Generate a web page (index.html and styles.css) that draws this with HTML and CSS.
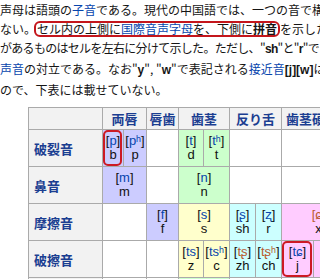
FILE: index.html
```html
<!DOCTYPE html>
<html lang="ja">
<head>
<meta charset="utf-8">
<title>声母</title>
<link rel="stylesheet" href="styles.css">
</head>
<body>
<div class="intro">
  <div class="line">声母は語頭の<a href="#">子音</a>である。現代の中国語では、一つの音で構成</div>
  <div class="line">ない。<span class="note">セル内の上側に<a href="#">国際音声字母</a>を、下側に<b>拼音</b></span>を示した</div>
  <div class="line tight">があるものはセルを左右に分けて示した。ただし、"<b>sh</b>"と"<b>r</b>"で</div>
  <div class="line"><a href="#">声音</a>の対立である。なお"<b>y</b>", "<b>w</b>"で表記される<a href="#">接近音</a><b>[j][w]</b>は</div>
  <div class="line">ので、下表には載せていない。</div>
</div>

<table class="ipa">
  <colgroup>
    <col class="w74"><col class="w21"><col class="w23"><col class="w32"><col class="w25"><col class="w26"><col class="w26"><col class="w26"><col class="w32"><col class="w42"><col class="w45">
  </colgroup>
  <tr class="head">
    <th class="corner"></th>
    <th colspan="2"><a href="#">両唇</a></th>
    <th><a href="#">唇歯</a></th>
    <th colspan="2"><a href="#">歯茎</a></th>
    <th colspan="2"><a href="#">反り舌</a></th>
    <th colspan="2"><a href="#">歯茎硬口蓋</a></th>
    <th><a href="#">軟口蓋</a></th>
  </tr>
  <tr>
    <th class="rh"><a href="#">破裂音</a></th>
    <td class="lab mark">[<a href="#">p</a>]<br>b</td>
    <td class="lab">[<a href="#">pʰ</a>]<br>p</td>
    <td></td>
    <td class="alv">[<a href="#">t</a>]<br>d</td>
    <td class="alv">[<a href="#">tʰ</a>]<br>t</td>
    <td colspan="2"></td>
    <td colspan="2"></td>
    <td>[<a href="#">k</a>]<br>g</td>
  </tr>
  <tr>
    <th class="rh"><a href="#">鼻音</a></th>
    <td class="lab" colspan="2">[<a href="#">m</a>]<br>m</td>
    <td></td>
    <td class="alv" colspan="2">[<a href="#">n</a>]<br>n</td>
    <td colspan="2"></td>
    <td colspan="2"></td>
    <td></td>
  </tr>
  <tr>
    <th class="rh"><a href="#">摩擦音</a></th>
    <td colspan="2"></td>
    <td class="lab">[<a href="#">f</a>]<br>f</td>
    <td class="sib" colspan="2">[<a href="#">s</a>]<br>s</td>
    <td class="ret">[<a href="#">ʂ</a>]<br>sh</td>
    <td class="ret">[<a href="#">ʐ</a>]<br>r</td>
    <td class="pal" colspan="2"><span class="red">[ɕ]</span><br>x</td>
    <td>[<a href="#">x</a>]<br>h</td>
  </tr>
  <tr>
    <th class="rh"><a href="#">破擦音</a></th>
    <td colspan="2"></td>
    <td></td>
    <td class="sib">[<a href="#">ts</a>]<br>z</td>
    <td class="sib">[<a href="#">tsʰ</a>]<br>c</td>
    <td class="ret">[<a class="red" href="#">tʂ</a>]<br>zh</td>
    <td class="ret">[<a class="red" href="#">tʂʰ</a>]<br>ch</td>
    <td class="pal mark">[<a href="#">tɕ</a>]<br>j</td>
    <td class="pal">[<a href="#">tɕʰ</a>]<br>q</td>
    <td></td>
  </tr>
  <tr>
    <th class="rh"><a href="#">側面接近音</a></th>
    <td colspan="2"></td>
    <td></td>
    <td class="alv" colspan="2">[<a href="#">l</a>]<br>l</td>
    <td colspan="2"></td>
    <td colspan="2"></td>
    <td></td>
  </tr>
</table>
</body>
</html>
```

FILE: styles.css
```css
html, body {
  margin: 0;
  padding: 0;
  background: #fff;
  overflow: hidden;
}
body {
  width: 320px;
  height: 279px;
  font-family: "Noto Sans CJK JP", "Noto Sans", sans-serif;
  color: #151515;
}
a {
  color: #0645ad;
  text-decoration: none;
}
.intro {
  font-size: 12px;
  line-height: 19px;
  white-space: nowrap;
}
.line {
  display: block;
}
.line.tight {
  letter-spacing: -0.7px;
}
.line b {
  font-family: "Liberation Sans", "Noto Sans CJK JP", sans-serif;
  font-weight: bold;
}
.note b {
  font-family: "Noto Sans CJK JP", sans-serif;
}
.note {
  display: inline-block;
  border: 2px solid #c4161c;
  border-radius: 6px;
  line-height: 12px;
  padding: 0 1px;
  margin-left: -2px;
}

.ipa {
  margin: 8px 0 0 28px;
  border-collapse: collapse;
  table-layout: fixed;
  width: 372px;
  font-family: "Liberation Sans", "DejaVu Sans", Arial, sans-serif;
  font-size: 13px;
  line-height: 14px;
  text-align: center;
  color: #111;
}
.w74 { width: 74px; }
.w21 { width: 21px; }
.w23 { width: 23px; }
.w32 { width: 32px; }
.w25 { width: 25px; }
.w26 { width: 26px; }
.w42 { width: 42px; }
.w45 { width: 45px; }

.ipa th,
.ipa td {
  border: 1px solid #aaa;
  padding: 3px 1px;
  white-space: nowrap;
  overflow: hidden;
  vertical-align: middle;
}
.ipa td {
  padding: 4px 1px;
}
.ipa th {
  background: #f2f2f2;
  font-family: "Noto Sans CJK JP", sans-serif;
  font-weight: bold;
  font-size: 13px;
  line-height: 15px;
}
.ipa th a {
  color: #1b3e91;
}
.ipa th.rh {
  text-align: left;
  padding-left: 5px;
}
.lab { background: #ccccff; }
.alv { background: #ccffcc; }
.sib { background: #ffffcc; }
.ret { background: #ccffff; }
.pal { background: #ffccff; }
.ipa .red { color: #b85a2e; }

.mark {
  position: relative;
}
.mark::after {
  content: "";
  position: absolute;
  left: 0;
  top: 0;
  right: 1px;
  bottom: 0;
  border: 2px solid #cc1a24;
  border-radius: 5px;
}
```
